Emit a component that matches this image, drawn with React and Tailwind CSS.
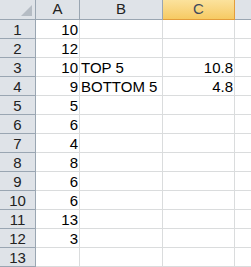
import React from "react";

const rows = [
  ["10", "", ""],
  ["12", "", ""],
  ["10", "TOP 5", "10.8"],
  ["9", "BOTTOM 5", "4.8"],
  ["5", "", ""],
  ["6", "", ""],
  ["4", "", ""],
  ["8", "", ""],
  ["6", "", ""],
  ["6", "", ""],
  ["13", "", ""],
  ["3", "", ""],
  ["", "", ""],
];

const App = () => {
  return (
    <div
      className="w-[251px] h-[267px] overflow-hidden bg-white text-[15px] text-black"
      style={{ fontFamily: "'Liberation Sans', Arial, sans-serif" }}
    >
      <div className="grid grid-cols-[36px_44px_83px_72px_40px]">
        <div className="relative h-[20px] bg-[#dfe3e8] border-r border-b border-[#9aa6b2]">
          <div className="absolute right-[3px] bottom-[3px] w-0 h-0 border-l-[11px] border-l-transparent border-b-[11px] border-b-[#b5bcc4]" />
        </div>
        <div className="h-[20px] bg-[#dfe3e8] border-r border-b border-[#9aa6b2] flex items-center justify-center text-[#222]">A</div>
        <div className="h-[20px] bg-[#dfe3e8] border-r border-b border-[#9aa6b2] flex items-center justify-center text-[#222]">B</div>
        <div className="h-[20px] bg-gradient-to-b from-[#fbe29c] to-[#f6ca62] border-r border-b border-[#e39d3b] flex items-center justify-center text-[#3f4a5c]">C</div>
        <div className="h-[20px] bg-[#dfe3e8] border-b border-[#9aa6b2]" />
        {rows.map((r, i) => (
          <React.Fragment key={i}>
            <div className="h-[19px] bg-[#dfe3e8] border-r border-b border-[#9aa6b2] flex items-center justify-center text-[#222] leading-none">
              {i + 1}
            </div>
            <div className="h-[19px] border-r border-b border-[#dadcdd] flex items-center justify-end pr-[1px] leading-none">
              {r[0]}
            </div>
            <div className="h-[19px] border-r border-b border-[#dadcdd] flex items-center pl-[1px] leading-none whitespace-nowrap">
              {r[1]}
            </div>
            <div className="h-[19px] border-r border-b border-[#dadcdd] flex items-center justify-end pr-[1px] leading-none">
              {r[2]}
            </div>
            <div className="h-[19px] border-b border-[#dadcdd]" />
          </React.Fragment>
        ))}
      </div>
    </div>
  );
};

export default App;
